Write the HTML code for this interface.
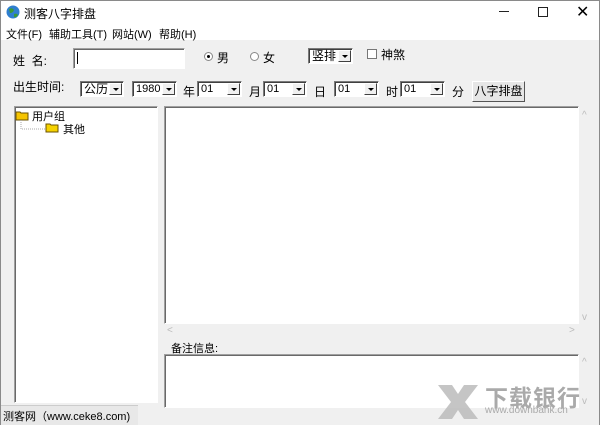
<!DOCTYPE html>
<html><head><meta charset="utf-8"><style>
*{margin:0;padding:0;box-sizing:border-box}
body{width:600px;height:425px;overflow:hidden;background:#f0f0f0;font-family:"Liberation Sans","Noto Sans CJK SC",sans-serif;font-size:11px;color:#000;position:relative}
.a{position:absolute}
.win{position:absolute;left:0;top:0;width:600px;height:425px;border:1px solid #8a8a8a;border-bottom:none}
.sel{position:absolute;height:16px;background:#fff;border:1px solid;border-color:#7a7a7a #fff #fff #7a7a7a;box-shadow:inset 1px 1px 0 #404040;font-size:11px;line-height:14px;padding-left:3px}
.sel i{position:absolute;right:1px;top:1px;width:13px;height:12px;background:#f0f0f0;border:1px solid;border-color:#fff #404040 #404040 #fff}
.sel i:after{content:"";position:absolute;left:3px;top:4px;border:3px solid transparent;border-top:3px solid #000;border-bottom:none}
.box{position:absolute;background:#fff;border:1px solid;border-color:#a0a0a0 #fff #fff #a0a0a0;box-shadow:inset 1px 1px 0 #696969}
.t{position:absolute;font-size:12px;white-space:nowrap}
</style></head><body>
<div class="a" style="left:0;top:0;width:600px;height:40px;background:#fff"></div>
<svg class="a" style="left:6px;top:5px" width="14" height="14"><circle cx="7" cy="7" r="6.5" fill="#2f7fcf"/><path d="M3 4 q3 -2 5 1 q-1 3 -4 3z M8 9 q3 -1 4 1 q-2 3 -4 2z" fill="#3a9a3a"/></svg>
<div class="t" style="left:24px;top:5px">测客八字排盘</div>
<div class="a" style="left:499px;top:11px;width:10px;height:1px;background:#222"></div>
<div class="a" style="left:538px;top:7px;width:10px;height:10px;border:1px solid #222"></div>
<div class="t" style="left:576px;top:2px;font-size:16px;font-weight:300">✕</div>
<div class="t" style="left:6px;top:26px;font-size:11px">文件(F)</div>
<div class="t" style="left:49px;top:26px;font-size:11px">辅助工具(T)</div>
<div class="t" style="left:112px;top:26px;font-size:11px">网站(W)</div>
<div class="t" style="left:159px;top:26px;font-size:11px">帮助(H)</div>

<div class="t" style="left:13px;top:52px">姓&nbsp;&nbsp;名:</div>
<div class="box" style="left:73px;top:48px;width:112px;height:21px"><div class="a" style="left:3px;top:3px;width:1px;height:12px;background:#000"></div></div>
<div class="a" style="left:204px;top:52px;width:9px;height:9px;border-radius:50%;border:1px solid #888;background:#fff"><div class="a" style="left:2px;top:2px;width:3px;height:3px;border-radius:50%;background:#000"></div></div>
<div class="t" style="left:217px;top:49px">男</div>
<div class="a" style="left:250px;top:52px;width:9px;height:9px;border-radius:50%;border:1px solid #888;background:#fff"></div>
<div class="t" style="left:263px;top:49px">女</div>
<div class="sel" style="left:308px;top:48px;width:45px;font-size:12px">竖排<i></i></div>
<div class="a" style="left:367px;top:49px;width:10px;height:10px;border:1px solid #777;background:#fff"></div>
<div class="t" style="left:381px;top:46px">神煞</div>

<div class="t" style="left:13px;top:78px">出生时间:</div>
<div class="sel" style="left:80px;top:81px;width:44px;font-size:12px">公历<i></i></div>
<div class="sel" style="left:132px;top:81px;width:45px">1980<i></i></div>
<div class="t" style="left:183px;top:83px">年</div>
<div class="sel" style="left:197px;top:81px;width:45px">01<i></i></div>
<div class="t" style="left:249px;top:83px">月</div>
<div class="sel" style="left:263px;top:81px;width:44px">01<i></i></div>
<div class="t" style="left:314px;top:83px">日</div>
<div class="sel" style="left:334px;top:81px;width:45px">01<i></i></div>
<div class="t" style="left:386px;top:83px">时</div>
<div class="sel" style="left:400px;top:81px;width:45px">01<i></i></div>
<div class="t" style="left:452px;top:83px">分</div>
<div class="a" style="left:472px;top:81px;width:53px;height:21px;background:#e6e6e6;border:1px solid;border-color:#fff #555 #555 #fff;font-size:12px;text-align:center;line-height:18px">八字排盘</div>

<div class="box" style="left:14px;top:106px;width:144px;height:297px"></div>
<svg class="a" style="left:15px;top:110px" width="80" height="26"><path d="M1 2h4l1 1h7v7H1z" fill="#f5c400" stroke="#6a5200"/><path d="M6 10 V19 H30" fill="none" stroke="#aaa" stroke-dasharray="1 1"/><path d="M31 14h4l1 1h7v7H31z" fill="#f5d200" stroke="#6a5200"/></svg>
<div class="t" style="left:32px;top:108px;font-size:11px">用户组</div>
<div class="t" style="left:63px;top:121px;font-size:11px">其他</div>

<div class="box" style="left:164px;top:106px;width:415px;height:218px"></div>
<div class="t" style="left:582px;top:110px;color:#bbb;font-size:10px">^</div>
<div class="t" style="left:582px;top:312px;color:#bbb;font-size:10px">v</div>
<div class="t" style="left:167px;top:325px;color:#bbb;font-size:10px">&lt;</div>
<div class="t" style="left:569px;top:325px;color:#bbb;font-size:10px">&gt;</div>
<div class="t" style="left:171px;top:340px;font-size:11px">备注信息:</div>
<div class="box" style="left:164px;top:354px;width:415px;height:54px"></div>
<div class="t" style="left:582px;top:357px;color:#bbb;font-size:10px">^</div>
<div class="t" style="left:582px;top:396px;color:#bbb;font-size:10px">v</div>

<div class="a" style="left:0;top:405px;width:138px;height:20px;background:#e8e8e8;border-top:1px solid #ccc"></div>
<div class="t" style="left:3px;top:408px;font-size:11px">测客网（www.ceke8.com)</div>

<svg class="a" style="left:436px;top:383px" width="44" height="38"><path d="M2 2h14l6 9 6-9h14l-13 17 13 17H28l-6-9-6 9H2l13-17z" fill="#bbb" opacity=".85"/></svg>
<div class="t" style="left:485px;top:379px;font-size:23px;color:#aaa;font-weight:bold;letter-spacing:1px">下载银行</div>
<div class="t" style="left:485px;top:405px;font-size:10px;color:#aaa">www.downbank.cn</div>
<div class="win"></div>
</body></html>
